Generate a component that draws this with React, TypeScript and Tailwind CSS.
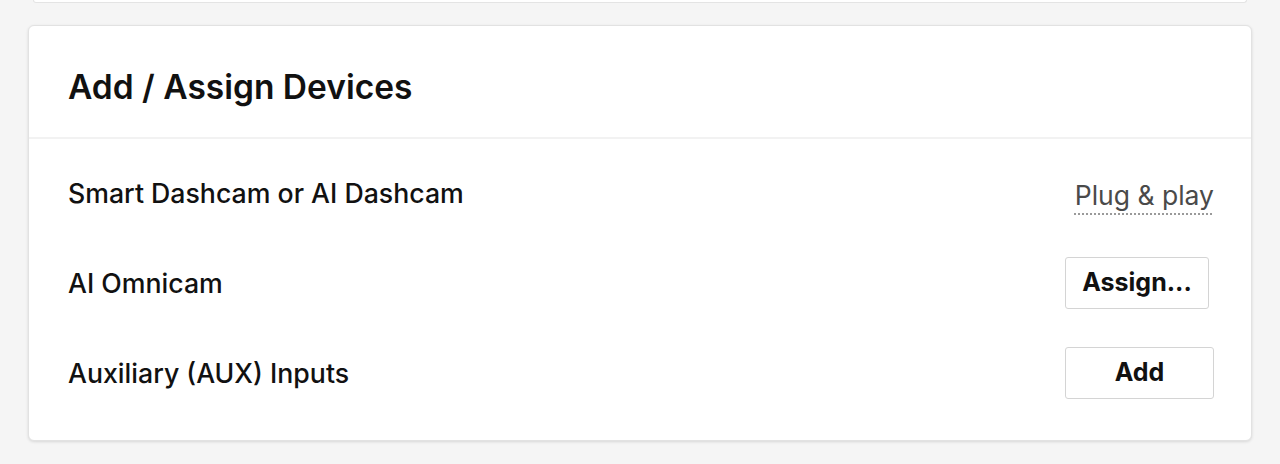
import React from "react";

interface DeviceRow {
  label: string;
  action: "plug" | "assign" | "add";
}

const rows: DeviceRow[] = [
  { label: "Smart Dashcam or AI Dashcam", action: "plug" },
  { label: "AI Omnicam", action: "assign" },
  { label: "Auxiliary (AUX) Inputs", action: "add" },
];

const RowAction: React.FC<{ action: DeviceRow["action"] }> = ({ action }) => {
  if (action === "plug") {
    return (
      <span className="text-[26.5px] leading-none text-[#4a4a4a] underline decoration-dotted decoration-[#9a9a9a] decoration-2 underline-offset-[9px] mt-[4px]">
        Plug &amp; play
      </span>
    );
  }
  if (action === "assign") {
    return (
      <button className="h-[52px] w-[144px] mr-[5px] rounded-[3px] border border-[#d4d4d4] bg-white text-[25px] font-bold text-[#111]">
        Assign...
      </button>
    );
  }
  return (
    <button className="h-[52px] w-[149px] rounded-[3px] border border-[#d4d4d4] bg-white text-[25px] font-bold text-[#111]">
      Add
    </button>
  );
};

export default function App() {
  return (
    <div
      className="h-[464px] w-full bg-[#f5f5f5] overflow-hidden"
      style={{ fontFamily: "Inter, 'Liberation Sans', sans-serif" }}
    >
      <div className="mx-[33px] h-[3px] rounded-b-md border-b border-x border-[#e4e4e4] bg-white" />
      <div className="mx-[28px] mt-[22px] rounded-md border border-[#e2e2e2] bg-white shadow-[0_1px_3px_rgba(0,0,0,0.12)]">
        <div className="flex h-[113px] items-center px-[39px] border-b-2 border-[#f2f2f2]">
          <h2 className="text-[33.5px] font-semibold text-[#111] pt-[12px]">
            Add / Assign Devices
          </h2>
        </div>
        <div className="pl-[39px] pr-[37px] pt-[28px] pb-[41px] flex flex-col gap-[38px]">
          {rows.map((row) => (
            <div key={row.label} className="flex h-[52px] items-center justify-between">
              <span className="text-[26.7px] font-medium text-[#111]">{row.label}</span>
              <RowAction action={row.action} />
            </div>
          ))}
        </div>
      </div>
    </div>
  );
}
